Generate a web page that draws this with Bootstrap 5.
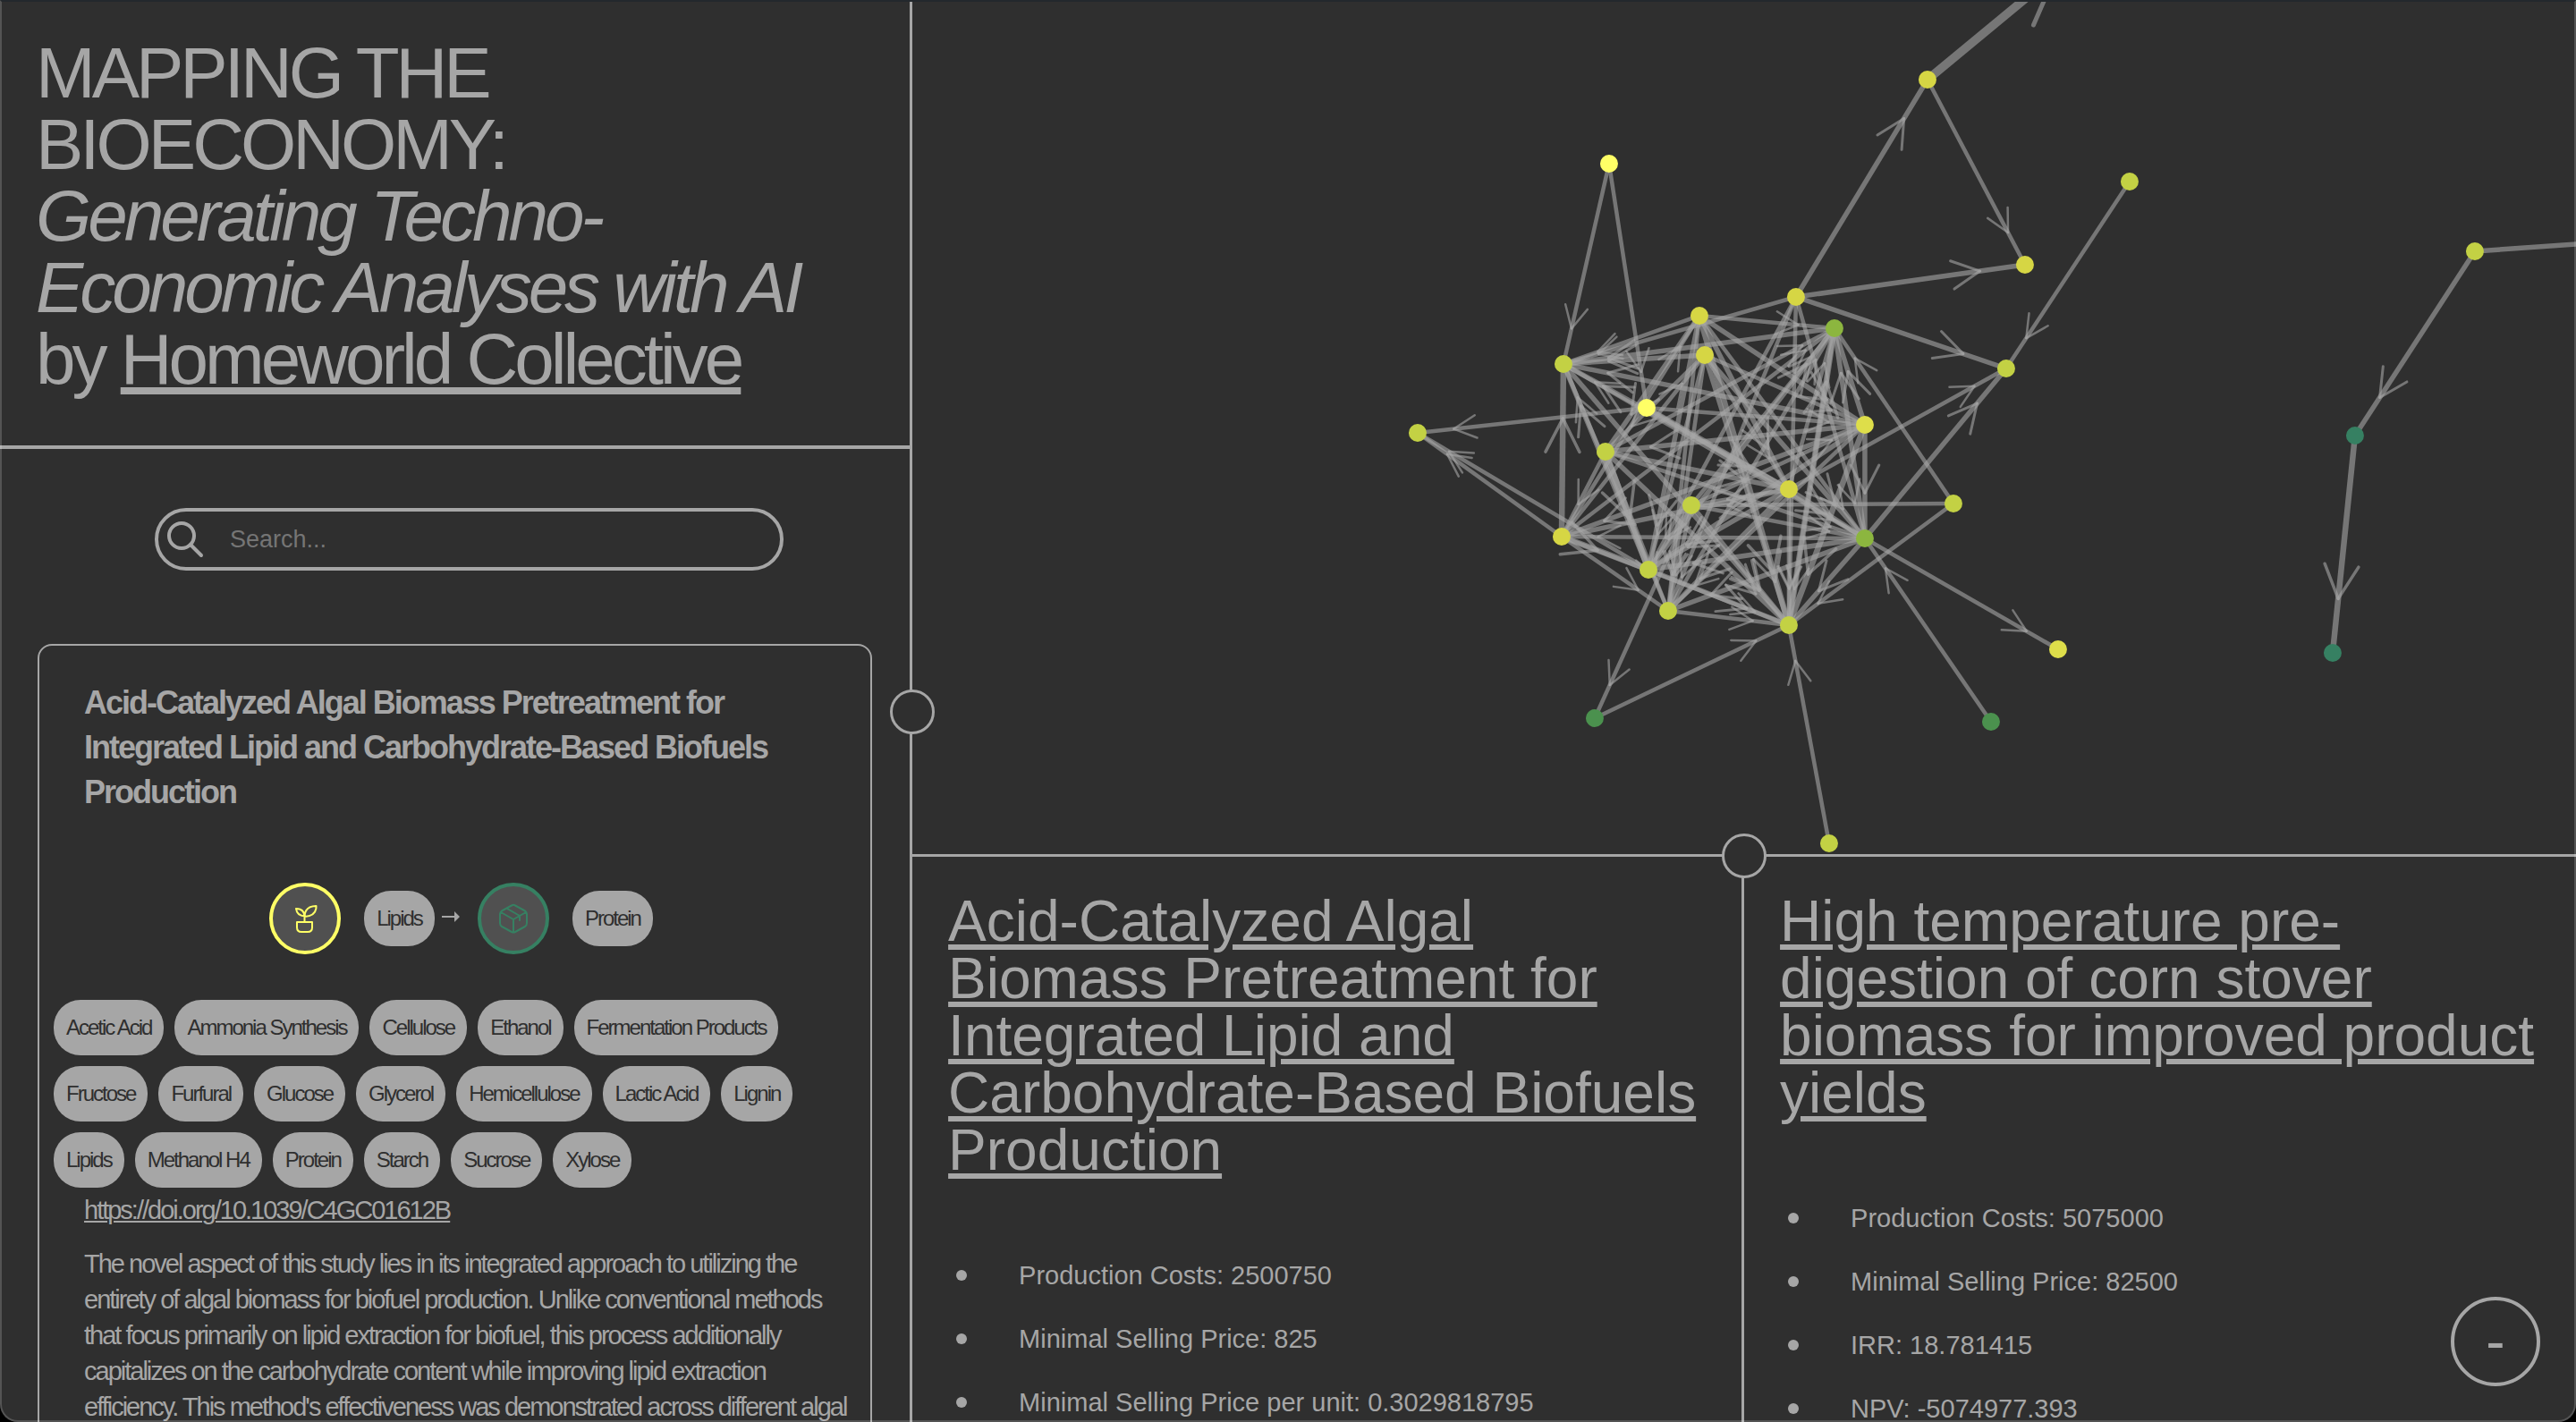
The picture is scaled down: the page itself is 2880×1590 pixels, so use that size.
<!DOCTYPE html>
<html lang="en">
<head>
<meta charset="utf-8">
<meta name="viewport" content="width=device-width, initial-scale=1">
<title>Mapping the Bioeconomy</title>
<link href="https://cdn.jsdelivr.net/npm/bootstrap@5.3.0/dist/css/bootstrap.min.css" rel="stylesheet">
<style>
:root{--ink:#a6a6a6;--ground:#2f2f2f;--feed:#ffff66;--product:#368062}
body{background:var(--ground);color:var(--ink);font-family:"Liberation Sans",Arial,sans-serif;font-size:29px;line-height:40px}
a,a:hover{color:inherit}
.app-shell{padding-top:2px}
.window-edge{position:fixed;inset:0;z-index:20;pointer-events:none;border:2px solid rgba(255,255,255,.18);border-top-color:#23282d;border-radius:0 0 20px 20px;box-shadow:0 0 0 30px #000}
.side-pane{flex:0 0 35.42%;border-right:3px solid var(--ink);letter-spacing:-2px}
.side-head{padding:40px 40px 56px;border-bottom:4px solid var(--ink)}
.site-title{font-size:80px;line-height:80px;font-weight:400;letter-spacing:-4px}
.site-title a{text-decoration-thickness:8px;text-underline-offset:4px;text-decoration-skip-ink:none}
.search-zone{padding:66px 141px 82px 173px}
.search-box{height:70px;border:4px solid var(--ink);border-radius:35px;padding-left:8px}
.search-box input,.search-box input:focus{background:transparent;color:var(--ink);font-size:27px;line-height:40px;padding:0 0 0 28px}
.search-box input::placeholder{color:#757575;opacity:1}
.paper-card{margin:0 42px;border:2px solid var(--ink);border-radius:16px;padding:39px 0}
.paper-body{padding-left:50px;padding-right:20px}
.paper-title{font-size:36px;line-height:50px;font-weight:700;padding-bottom:76px}
.flow-row{padding-bottom:51px;padding-left:14px}
.round-icon{width:80px;height:80px;border:4px solid;border-radius:50%;background:#505050;margin-right:26px}
.round-icon svg{margin:-4px}
.chip{background:var(--ink);color:var(--ground);font-size:24px;line-height:34px;padding:14px;border-radius:30px}
.flow-arrow{margin:0 20px 4px 8px}
.chip-list{gap:12px;padding:0 16px 5px}
.doi-link{text-decoration-thickness:2px;text-underline-offset:2px}
.abstract{padding-top:20px}
.graph-pane{flex:0 0 60.2%;border-bottom:3px solid var(--ink)}
.result-pane{flex:0 0 50%;padding:40px}
.result-pane.split{border-right:3px solid var(--ink)}
.result-pane h2{font-size:64px;line-height:64px;font-weight:400}
.result-pane h2 a{text-decoration-thickness:6px;text-underline-offset:4px}
.fact-list{padding:88px 0 0 9px}
.fact-list li{display:flex;align-items:center;gap:58px;margin-bottom:31px}
.fact-list li::before{content:"";width:12px;height:12px;border-radius:50%;background:var(--ink)}
.grip{position:absolute;width:50px;height:50px;padding:0;border:3px solid var(--ink);border-radius:50%;background:var(--ground);z-index:5}
.grip-side{right:-28px;top:50%;transform:translateY(-50%)}
.grip-graph{left:50%;bottom:-27px;transform:translateX(-50%)}
.collapse-btn{position:fixed;right:40px;bottom:40px;width:100px;height:100px;border:4px solid var(--ink);border-radius:50%;background:var(--ground);color:var(--ink);font-size:64px;line-height:64px;padding:0;z-index:6}
</style>
</head>
<body>
<div class="app-shell d-flex vh-100 overflow-hidden">
  <aside class="side-pane position-relative d-flex flex-column">
    <header class="side-head">
      <h1 class="site-title mb-0">MAPPING THE<br>BIOECONOMY:<br><em>Generating Techno-<br>Economic Analyses with AI</em><br>by <a href="#">Homeworld Collective</a></h1>
    </header>
    <div class="overflow-hidden flex-grow-1">
      <form class="search-zone" role="search">
        <div class="search-box d-flex align-items-center">
          <label for="q" class="d-flex"><svg width="44" height="44" viewBox="0 0 44 44" fill="none" stroke="#a6a6a6" stroke-width="4" stroke-linecap="round" aria-label="Search"><circle cx="18" cy="18" r="14"/><path d="M28 28 40 40"/></svg></label>
          <input id="q" type="text" class="form-control border-0 shadow-none" placeholder="Search...">
        </div>
      </form>
      <article class="paper-card">
        <h2 class="paper-title paper-body mb-0">Acid-Catalyzed Algal Biomass Pretreatment for Integrated Lipid and Carbohydrate-Based Biofuels Production</h2>
        <div class="flow-row d-flex justify-content-center align-items-center">
          <span class="round-icon" style="color:var(--feed)"><svg width="80" height="80" viewBox="0 0 80 80" fill="none" stroke="currentColor" stroke-width="2" stroke-linejoin="round" stroke-linecap="round"><path d="M31 44h17v6q0 5-5 5h-7q-5 0-5-5zM39.500 43V35M39.500 37.500Q31 37 30 29Q39 29 39.500 37.500ZM39.500 38Q40 26 52.500 26Q53 37 39.500 38Z"/></svg></span>
          <span class="chip">Lipids</span>
          <svg class="flow-arrow" width="20" height="12" viewBox="0 0 20 12" fill="#a6a6a6"><path d="M0 5h14V0l6 6-6 6V7H0z"/></svg>
          <span class="round-icon" style="color:var(--product)"><svg width="80" height="80" viewBox="0 0 80 80" fill="none" stroke="currentColor" stroke-width="2" stroke-linejoin="round" stroke-linecap="round"><path d="M38 25.500Q40 24 42 25.500L53 31.500Q55 33 55 35V45Q55 48 53 49L42 55Q40 56 38 55L27 49Q25 48 25 45V35Q25 33 27 31.500ZM26 33 40 41 54 33M40 41V55M33 29 47 37V42"/></svg></span>
          <span class="chip">Protein</span>
        </div>
        <div class="chip-list d-flex flex-wrap">
          <span class="chip">Acetic Acid</span><span class="chip">Ammonia Synthesis</span><span class="chip">Cellulose</span><span class="chip">Ethanol</span><span class="chip">Fermentation Products</span><span class="chip">Fructose</span><span class="chip">Furfural</span><span class="chip">Glucose</span><span class="chip">Glycerol</span><span class="chip">Hemicellulose</span><span class="chip">Lactic Acid</span><span class="chip">Lignin</span><span class="chip">Lipids</span><span class="chip">Methanol H4</span><span class="chip">Protein</span><span class="chip">Starch</span><span class="chip">Sucrose</span><span class="chip">Xylose</span>
        </div>
        <div class="paper-body">
          <a class="doi-link" href="https://doi.org/10.1039/C4GC01612B">https://doi.org/10.1039/C4GC01612B</a>
          <p class="abstract mb-0">The novel aspect of this study lies in its integrated approach to utilizing the entirety of algal biomass for biofuel production. Unlike conventional methods that focus primarily on lipid extraction for biofuel, this process additionally capitalizes on the carbohydrate content while improving lipid extraction efficiency. This method's effectiveness was demonstrated across different algal</p>
        </div>
      </article>
    </div>
    <button class="grip grip-side" type="button" aria-label="Resize sidebar"></button>
  </aside>
  <main class="flex-grow-1 d-flex flex-column">
    <section class="graph-pane position-relative">
      <svg id="graph" class="d-block w-100 h-100" viewBox="1020 2 1860 953" preserveAspectRatio="xMidYMid slice" aria-label="Process network"></svg>
      <button class="grip grip-graph" type="button" aria-label="Resize graph"></button>
    </section>
    <div class="d-flex flex-grow-1 overflow-hidden">
      <section class="result-pane split">
        <h2 class="mb-0"><a href="#">Acid-Catalyzed Algal Biomass Pretreatment for Integrated Lipid and Carbohydrate-Based Biofuels Production</a></h2>
        <ul class="fact-list list-unstyled mb-0"><li>Production Costs: 2500750</li><li>Minimal Selling Price: 825</li><li>Minimal Selling Price per unit: 0.3029818795</li></ul>
      </section>
      <section class="result-pane">
        <h2 class="mb-0"><a href="#">High temperature pre-digestion of corn stover biomass for improved product yields</a></h2>
        <ul class="fact-list list-unstyled mb-0"><li>Production Costs: 5075000</li><li>Minimal Selling Price: 82500</li><li>IRR: 18.781415</li><li>NPV: -5074977.393</li></ul>
      </section>
    </div>
  </main>
</div>
<button class="collapse-btn" type="button" aria-label="Collapse">-</button>
<div class="window-edge"></div>
<script src="https://cdn.jsdelivr.net/npm/bootstrap@5.3.0/dist/js/bootstrap.bundle.min.js"></script>
<script>
const lime='#c3d144', gold='#d6d644', sun='#dede4a', bright='#ffff66', leaf='#8cb63f', fern='#4b914e', pine='#368062';
const nodes={
 A:[1799,183,bright],B:[1748,407,lime],C:[1841,456,bright],D:[1900,353,gold],E:[1906,397,gold],F:[2008,332,gold],G:[2051,367,leaf],
 H:[2085,475,sun],I:[2000,547,gold],J:[1891,565,lime],K:[1795,505,lime],L:[1746,600,gold],M:[1843,637,lime],N:[1865,683,lime],
 O:[2000,699,lime],P:[2085,602,leaf],Q:[2184,563,lime],R:[2243,412,lime],S:[2264,296,gold],T:[2381,203,lime],U:[1585,484,lime],
 V:[1783,803,fern],W:[2226,807,fern],X:[2301,726,sun],Y:[2045,943,lime],Z:[2155,89,gold],a:[2767,281,lime],b:[2633,487,pine],
 c:[2608,730,pine],d:[2369,-88,lime],e:[3010,264,lime]};
// each edge: source, target, weight
const edges=`AB4 AC4 CU4 LU4 MU4 LB6 TR4 ZS4 FZ5 FS5 FR5 PR5 IR4 QG4 QO4 QJ4 PX4 WP4 YO4 VO4 JV4 ab5 bc6 Zd9 ae5
LM6 LO4 LN4 PL4 HL5 LG4 LD4 LE4 LI5 KL4 FB4 DB4 GB5 EB5 HB5 IB5 PB4 BO5 NB4 MB5
DG4 DK5 DM5 DH5 DI5 DP4 DO6 DN4 EK4 EM4 EN4 EH4 EI4 EP5 EO5 FM4 FO4 FP4 FN4
KG4 JG4 IG4 MG5 NG4 OG6 PG5 HG5 CH4 CP4 CI5 HK5 HM5 HN4 HP5 HO6 JH4 KM6 KN4 KO5 KP4 KI5 IN5 IM5 IP5 IO4 IJ4
JP4 JO5 JN4 JM4 MO5 PM5 NO4 PN5 PO5 GO4`.split(/\s+/);
const svg=document.getElementById('graph');
const add=(tag,at)=>{const n=document.createElementNS('http://www.w3.org/2000/svg',tag);for(const k in at)n.setAttribute(k,at[k]);svg.append(n)};
const line=(x1,y1,x2,y2,w,cap)=>add('line',{x1,y1,x2,y2,stroke:'#a6a6a6','stroke-opacity':.6,'stroke-width':w,'stroke-linecap':cap});
for(const e of edges){
  const [x1,y1]=nodes[e[0]],[x2,y2]=nodes[e[1]],w=+e[2];
  line(x1,y1,x2,y2,w+.5,'butt');
  const back=Math.atan2(y1-y2,x1-x2),wing=w*7,tip=wing*1.45;
  const tx=x2+tip*Math.cos(back),ty=y2+tip*Math.sin(back);
  for(const s of [-.47,.47])line(tx,ty,tx+wing*Math.cos(back+s),ty+wing*Math.sin(back+s),w/2+.5,'round');
}
for(const k in nodes){const [cx,cy,fill]=nodes[k];add('circle',{cx,cy,r:10,fill})}
</script>
</body>
</html>
